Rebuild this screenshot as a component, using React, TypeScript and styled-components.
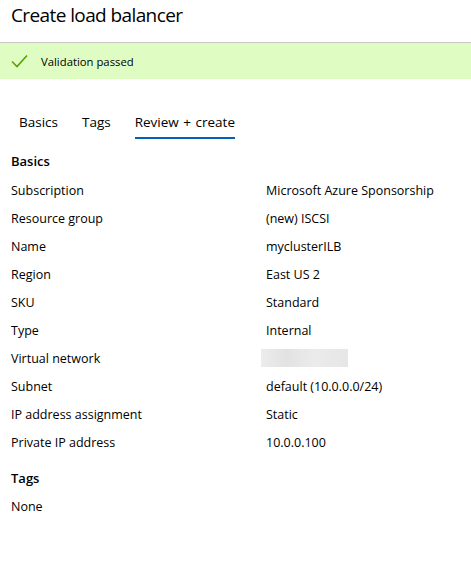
import React from 'react';
import styled, { createGlobalStyle } from 'styled-components';

const GlobalStyle = createGlobalStyle`
  body {
    margin: 0;
    background: #fff;
    font-family: "Segoe UI", "Open Sans", sans-serif;
    color: #000;
  }
`;

const Page = styled.div`
  width: 471px;
  height: 570px;
  overflow: hidden;
`;

const Title = styled.h1`
  margin: 0;
  padding: 2px 11px 0;
  height: 40px;
  font-size: 19px;
  font-weight: 400;
  line-height: 26px;
  letter-spacing: -0.6px;
`;

const Banner = styled.div`
  border-top: 1px solid #c8c8c8;
  background: #dffcc2;
  height: 36px;
  display: flex;
  align-items: center;
  gap: 13px;
  padding-left: 11px;
  font-size: 11.3px;
`;

const Tabs = styled.div`
  display: flex;
  gap: 24px;
  padding: 34px 0 0 19px;
`;

const Tab = styled.div<{ $active?: boolean }>`
  font-size: 13.5px;
  line-height: 18px;
  word-spacing: 1px;
  padding-bottom: 6px;
  border-bottom: 2px solid ${p => (p.$active ? '#0063b8' : 'transparent')};
`;

const Section = styled.h2<{ $gap: number }>`
  margin: ${p => p.$gap}px 0 0;
  padding: 0 11px;
  font-size: 13px;
  font-weight: 600;
  line-height: 28px;
`;

const Rows = styled.div`
  display: flex;
  flex-direction: column;
  padding-top: 1px;
`;

const Row = styled.div`
  display: grid;
  grid-template-columns: 255px 1fr;
  padding-left: 11px;
  height: 28px;
  align-items: center;
  font-size: 12.5px;
`;

const Blurred = styled.span`
  display: block;
  width: 87px;
  height: 18px;
  margin-left: -5px;
  background: linear-gradient(90deg, #ececec, #e2e2e2 30%, #ebebeb 60%, #e6e6e6);
  filter: blur(0.6px);
`;

const Check = () => (
  <svg width="17" height="14" viewBox="0 0 17 14">
    <path d="M1 7.5 L6 12.5 L16 1.5" fill="none" stroke="#57a300" strokeWidth="1.6" />
  </svg>
);

const basics: [string, React.ReactNode][] = [
  ['Subscription', 'Microsoft Azure Sponsorship'],
  ['Resource group', '(new) ISCSI'],
  ['Name', 'myclusterILB'],
  ['Region', 'East US 2'],
  ['SKU', 'Standard'],
  ['Type', 'Internal'],
  ['Virtual network', <Blurred />],
  ['Subnet', 'default (10.0.0.0/24)'],
  ['IP address assignment', 'Static'],
  ['Private IP address', '10.0.0.100'],
];

export default function App() {
  return (
    <Page>
      <GlobalStyle />
      <Title>Create load balancer</Title>
      <Banner>
        <Check />
        <span>Validation passed</span>
      </Banner>
      <Tabs>
        <Tab>Basics</Tab>
        <Tab>Tags</Tab>
        <Tab $active>Review + create</Tab>
      </Tabs>
      <Section $gap={8}>Basics</Section>
      <Rows>
        {basics.map(([k, v]) => (
          <Row key={k}>
            <span>{k}</span>
            <span>{v}</span>
          </Row>
        ))}
      </Rows>
      <Section $gap={8}>Tags</Section>
      <Row>None</Row>
    </Page>
  );
}
